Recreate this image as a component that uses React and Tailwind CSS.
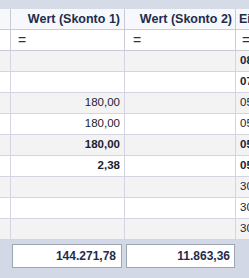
import React from 'react';

const rows = [
  { a: '', b: '', c: '08', bold: false, cBold: true },
  { a: '', b: '', c: '07', bold: false, cBold: true },
  { a: '180,00', b: '', c: '05', bold: false, cBold: false },
  { a: '180,00', b: '', c: '05', bold: false, cBold: false },
  { a: '180,00', b: '', c: '05', bold: true, cBold: true },
  { a: '2,38', b: '', c: '05', bold: true, cBold: true },
  { a: '', b: '', c: '30', bold: false, cBold: false },
  { a: '', b: '', c: '30', bold: false, cBold: false },
  { a: '', b: '', c: '30', bold: false, cBold: false },
];

export default function App() {
  return (
    <div className="w-[249px] h-[278px] overflow-hidden bg-white text-[#1b2233]" style={{ fontFamily: '"Liberation Sans", Arial, sans-serif' }}>
      <div className="h-[9px] bg-[#d5dbe7]" />

      {/* header */}
      <div className="flex h-[21px] bg-[#f6f8fc] border-b border-[#c9cbd9] text-[12.5px] font-bold text-[#1f2c4c]">
        <div className="w-[11px] shrink-0 border-r border-[#c9cbd9]" />
        <div className="w-[114px] shrink-0 border-r border-[#c9cbd9] flex items-center justify-end pr-[4px] whitespace-nowrap">Wert (Skonto 1)</div>
        <div className="w-[111px] shrink-0 border-r border-[#c9cbd9] flex items-center justify-end pr-[3px] whitespace-nowrap">Wert (Skonto 2)</div>
        <div className="flex-1 flex items-center pl-[3px] whitespace-nowrap overflow-hidden">Ei</div>
      </div>

      {/* filter row */}
      <div className="flex h-[21px] bg-white border-b border-[#c9cbd9] text-[14px] text-[#333]">
        <div className="w-[11px] shrink-0 border-r border-[#c9cbd9]" />
        <div className="w-[114px] shrink-0 border-r border-[#c9cbd9] flex items-center pl-[7px]">=</div>
        <div className="w-[111px] shrink-0 border-r border-[#c9cbd9] flex items-center pl-[8px]">=</div>
        <div className="flex-1 flex items-center pl-[6px]">=</div>
      </div>

      {rows.map((r, i) => (
        <div key={i} className={`flex h-[21px] border-b border-[#d4d4e2] text-[11.5px] ${i % 2 === 0 ? 'bg-[#f3f3f3]' : 'bg-white'}`}>
          <div className="w-[11px] shrink-0 border-r border-[#d4d4e2]" />
          <div className={`w-[114px] shrink-0 border-r border-[#d4d4e2] flex items-center justify-end pr-[4px] ${r.bold ? 'font-bold' : ''}`}>{r.a}</div>
          <div className="w-[111px] shrink-0 border-r border-[#d4d4e2] flex items-center justify-end pr-[4px]">{r.b}</div>
          <div className={`flex-1 flex items-center pl-[4px] overflow-hidden whitespace-nowrap ${r.cBold ? 'font-bold' : ''}`}>{r.c}</div>
        </div>
      ))}

      {/* footer summary */}
      <div className="flex h-[38px] bg-[#d2d8e5] pt-[4px] text-[12px] font-bold text-[#1f2c4c]">
        <div className="w-[12px] shrink-0" />
        <div className="w-[110px] h-[24px] shrink-0 bg-white border border-[#9ea6b5] flex items-center justify-end pr-[5px]">144.271,78</div>
        <div className="w-[4px] shrink-0" />
        <div className="w-[109px] h-[24px] shrink-0 bg-white border border-[#9ea6b5] flex items-center justify-end pr-[4px]">11.863,36</div>
      </div>
    </div>
  );
}
